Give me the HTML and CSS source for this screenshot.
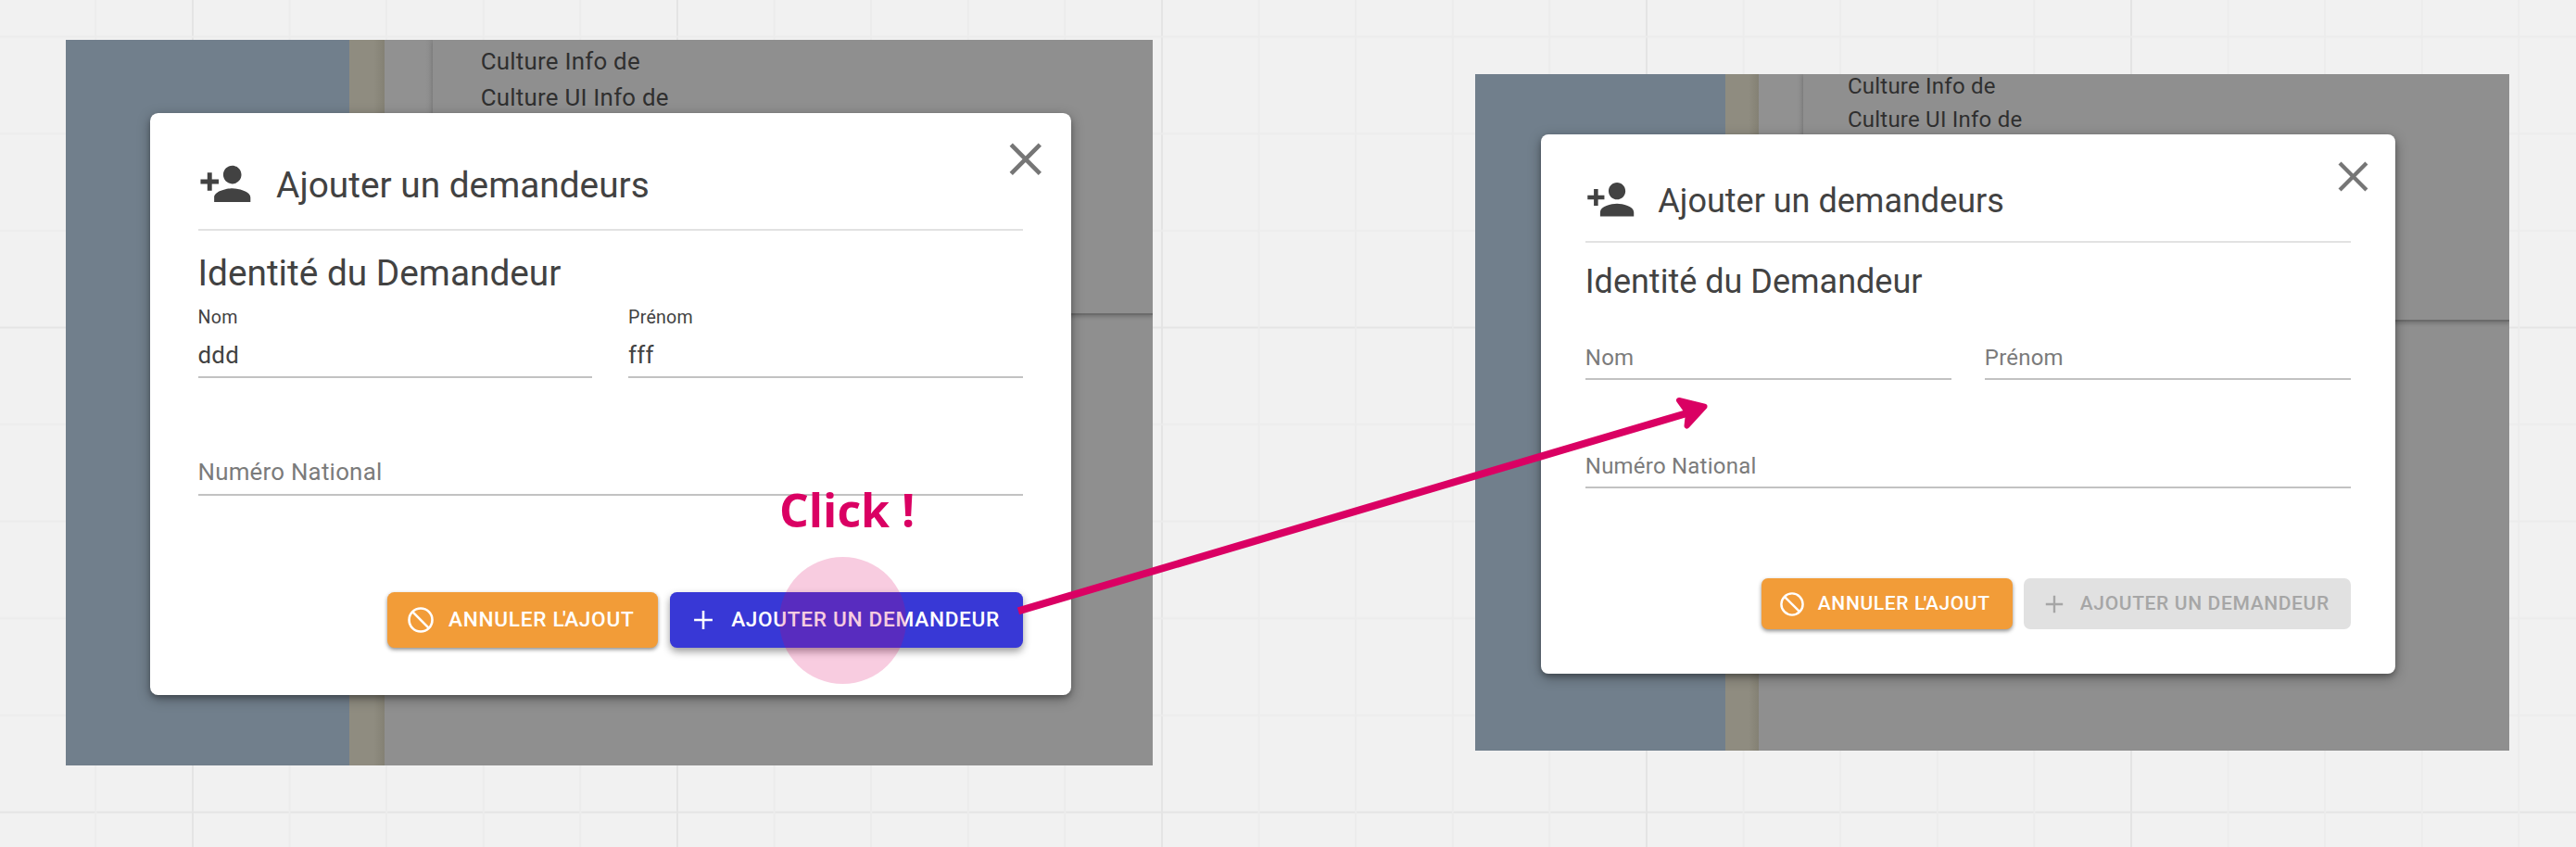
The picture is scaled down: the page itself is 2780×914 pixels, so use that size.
FILE: index.html
```html
<!DOCTYPE html>
<html lang="fr">
<head>
<meta charset="utf-8">
<title>Ajouter un demandeurs</title>
<link rel="stylesheet" href="styles.css">
</head>
<body>
<svg class="defs" width="0" height="0" aria-hidden="true">
  <symbol id="person-add" viewBox="0 0 24 24"><path d="M15 12c2.210 0 4-1.790 4-4s-1.790-4-4-4-4 1.790-4 4 1.790 4 4 4zm-9-2V7H4v3H1v2h3v3h2v-3h3v-2H6zm9 4c-2.670 0-8 1.340-8 4v2h16v-2c0-2.660-5.330-4-8-4z"/></symbol>
  <symbol id="close" viewBox="0 0 32 32"><path d="M2 2L30 30M30 2L2 30" fill="none" stroke="currentColor" stroke-width="4.200"/></symbol>
  <symbol id="block" viewBox="0 0 26 26"><g fill="none" stroke="currentColor" stroke-width="2.400"><circle cx="13" cy="13" r="11.600"/><path d="M4.800 4.800L21.200 21.200"/></g></symbol>
  <symbol id="plus" viewBox="0 0 26 26"><path d="M13 3.800V22.200M3.800 13H22.200" fill="none" stroke="currentColor" stroke-width="2.400"/></symbol>
</svg>
<main class="board">
  <svg class="grid" width="2780" height="914" aria-hidden="true">
    <defs>
      <pattern id="cells" width="523" height="523" patternUnits="userSpaceOnUse" patternTransform="translate(207 352.500)">
        <path fill="#e4e4e4" d="M0 0h2v523h-2zM0 0h523v2h-523z"/>
        <path fill="#ececec" d="M104.600 0h2v523h-2zM209.200 0h2v523h-2zM313.800 0h2v523h-2zM418.400 0h2v523h-2zM0 104.600h523v2h-523zM0 209.200h523v2h-523zM0 313.800h523v2h-523zM0 418.400h523v2h-523z"/>
      </pattern>
    </defs>
    <rect width="2780" height="914" fill="url(#cells)"/>
  </svg>

  <section class="shot shot-before">
    <div class="page">
      <div class="page-blue"></div><div class="page-tan"></div><div class="page-gutter"></div>
      <div class="page-main">
        <div class="page-info"><p>Culture Info de</p><p>Culture UI Info de</p></div>
      </div>
    </div>
    <div class="dialog">
      <svg class="close"><use href="#close"/></svg>
      <header class="head"><svg class="head-icon"><use href="#person-add"/></svg><h1>Ajouter un demandeurs</h1></header>
      <h2>Identité du Demandeur</h2>
      <div class="fields">
        <div class="field filled"><label>Nom</label><span>ddd</span></div>
        <div class="field filled"><label>Prénom</label><span>fff</span></div>
        <div class="field wide"><span>Numéro National</span></div>
      </div>
      <footer class="actions">
        <button class="btn cancel"><svg><use href="#block"/></svg><span>ANNULER <span class="tight">L'</span>AJOUT</span></button>
        <button class="btn add"><svg><use href="#plus"/></svg><span>AJOUTER UN DEMANDEUR</span></button>
      </footer>
    </div>
  </section>

  <section class="shot shot-after">
    <div class="page">
      <div class="page-blue"></div><div class="page-tan"></div><div class="page-gutter"></div>
      <div class="page-main">
        <div class="page-info"><p>Culture Info de</p><p>Culture UI Info de</p></div>
      </div>
    </div>
    <div class="dialog">
      <svg class="close"><use href="#close"/></svg>
      <header class="head"><svg class="head-icon"><use href="#person-add"/></svg><h1>Ajouter un demandeurs</h1></header>
      <h2>Identité du Demandeur</h2>
      <div class="fields">
        <div class="field"><span>Nom</span></div>
        <div class="field"><span>Prénom</span></div>
        <div class="field wide"><span>Numéro National</span></div>
      </div>
      <footer class="actions">
        <button class="btn cancel"><svg><use href="#block"/></svg><span>ANNULER <span class="tight">L'</span>AJOUT</span></button>
        <button class="btn add off" disabled><svg><use href="#plus"/></svg><span>AJOUTER UN DEMANDEUR</span></button>
      </footer>
    </div>
  </section>

  <div class="click-dot"></div>
  <div class="click-text">Click !</div>
  <svg class="arrow" width="2780" height="914" aria-hidden="true">
    <path d="M1099 659.300L1822 445.500" stroke="#da0063" stroke-width="8" fill="none"/>
    <path d="M1812 432L1839.500 438.700L1820.500 459.500L1822 446Z" fill="#da0063" stroke="#da0063" stroke-width="6" stroke-linejoin="round"/>
  </svg>
</main>
</body>
</html>
```

FILE: styles.css
```css
* { box-sizing: border-box; }
body { margin: 0; background: #f1f1f1; font-family: Roboto, "Liberation Sans", sans-serif; }
h1, h2, p { margin: 0; font-weight: 400; }
.defs { position: absolute; }
.board { position: relative; width: 2780px; height: 914px; overflow: hidden; }
.grid, .arrow { position: absolute; left: 0; top: 0; }

/* Captures placed on the free canvas; --u is the capture's scale unit */
.shot { position: absolute; overflow: hidden; }
.shot-before { --u: 1.078px; --cx: 13.400; --cy: 9; left: 71px; top: 43px; width: 1173px; height: 783px; }
.shot-after { --u: 1px; --cx: 0; --cy: 0; left: 1592px; top: 80px; width: 1116px; height: 730px; }

.page { display: flex; height: 100%; background: #8f8f8f; }
.page-blue { flex: none; width: calc((270 + var(--cx)) * var(--u)); background: #717f8c; }
.page-tan { flex: none; width: calc(35.500 * var(--u)); background: linear-gradient(90deg, #8f8c80 70%, #848174); }
.page-gutter { flex: none; width: calc(48 * var(--u)); height: calc((265.500 + var(--cy)) * var(--u)); background: linear-gradient(90deg, #919191 85%, #898989); }
.page-main { flex: 1; height: calc((266.500 + var(--cy)) * var(--u)); border-bottom: 2px solid #6b6b6b; box-shadow: 0 2px 4px rgba(0,0,0,.2); padding: calc(var(--cy) * var(--u)) 0 0 calc(48.500 * var(--u)); }
.page-info { margin-top: calc(-5 * var(--u)); color: #2f2f2f; font-size: calc(24 * var(--u)); line-height: calc(36.300 * var(--u)); letter-spacing: calc(.22 * var(--u)); }

.dialog { position: absolute; left: calc((70.800 + var(--cx)) * var(--u)); top: calc((64.600 + var(--cy)) * var(--u)); width: calc(922 * var(--u)); height: calc(582.500 * var(--u)); padding: calc(28 * var(--u)) calc(48 * var(--u)) calc(48 * var(--u)); border-radius: calc(8 * var(--u)); background: #fff; color: #424242; box-shadow: 0 4px 14px rgba(0,0,0,.35), 0 3px 5px rgba(0,0,0,.2); display: flex; flex-direction: column; }
.close { position: absolute; right: calc(28.500 * var(--u)); top: calc(29 * var(--u)); width: calc(33 * var(--u)); height: calc(33 * var(--u)); color: #767676; }
.head { display: flex; align-items: flex-start; height: calc(89.400 * var(--u)); border-bottom: 2px solid #e2e2e2; }
.head-icon { flex: none; width: calc(54.500 * var(--u)); height: calc(54.500 * var(--u)); margin: calc(15.500 * var(--u)) calc(24 * var(--u)) 0 0; fill: #424242; }
h1, h2 { font-size: calc(36 * var(--u)); line-height: calc(48 * var(--u)); }
.head h1 { margin-top: calc(20 * var(--u)); }
h2 { margin-top: calc(18.500 * var(--u)); }
.fields { margin-top: calc(1.500 * var(--u)); display: grid; grid-template-columns: 1fr 1fr; column-gap: calc(36 * var(--u)); row-gap: calc(37.300 * var(--u)); }
.field { height: calc(80 * var(--u)); border-bottom: 2px solid #c2c2c2; display: flex; flex-direction: column; justify-content: flex-end; padding-bottom: calc(8 * var(--u)); color: #7b7b7b; font-size: calc(24 * var(--u)); line-height: calc(28 * var(--u)); letter-spacing: calc(.22 * var(--u)); }
.field.filled { color: #424242; }
.field label { font-size: calc(18.200 * var(--u)); line-height: calc(22 * var(--u)); margin-bottom: calc(12 * var(--u)); }
.wide { grid-column: 1 / -1; }
.actions { display: flex; justify-content: flex-end; gap: calc(12 * var(--u)); margin-top: auto; }
.btn { display: flex; align-items: center; gap: calc(15 * var(--u)); height: calc(55 * var(--u)); border: 0; border-radius: calc(7 * var(--u)); padding: 0 calc(20 * var(--u)); color: #fff; font: 500 calc(21 * var(--u))/1 Roboto, sans-serif; letter-spacing: calc(.64 * var(--u)); white-space: nowrap; }
.btn svg { flex: none; width: calc(26 * var(--u)); height: calc(26 * var(--u)); }
.tight { letter-spacing: calc(-1.500 * var(--u)); }
.cancel { width: calc(271 * var(--u)); background: #f29c38; box-shadow: 0 2px 4px rgba(0,0,0,.45); }
.add { width: calc(353 * var(--u)); background: #3838d6; box-shadow: 0 4px 9px rgba(0,0,0,.4); }
.add.off { background: #e1e1e1; color: #a6a6a6; box-shadow: none; }

.click-dot { position: absolute; left: 841px; top: 601px; width: 137px; height: 137px; border-radius: 50%; background: rgba(218,0,99,.2); }
.click-text { position: absolute; left: 841px; top: 516px; color: #da0063; font: 700 50px/68px "Open Sans", sans-serif; white-space: nowrap; }
```
